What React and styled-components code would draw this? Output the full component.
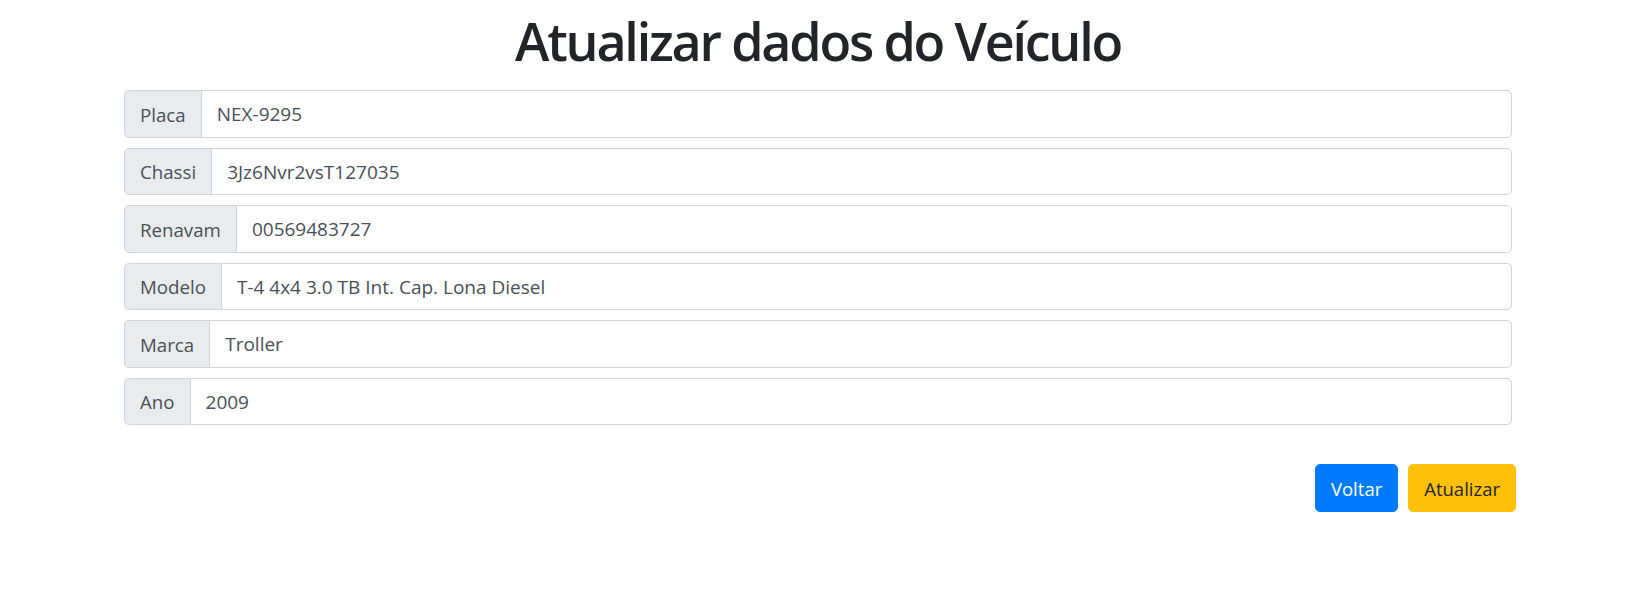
import React from "react";
import styled, { createGlobalStyle } from "styled-components";

const GlobalStyle = createGlobalStyle`
  body {
    margin: 0;
    background: #fff;
    font-family: "Open Sans", "Noto Sans", sans-serif;
    color: #212529;
  }
`;

// dados do veículo carregados
const fields = [
  { label: "Placa", value: "NEX-9295" },
  { label: "Chassi", value: "3Jz6Nvr2vsT127035" },
  { label: "Renavam", value: "00569483727" },
  { label: "Modelo", value: "T-4 4x4 3.0 TB Int. Cap. Lona Diesel" },
  { label: "Marca", value: "Troller" },
  { label: "Ano", value: "2009" },
];

const App = () => {
  return (
    <>
      <GlobalStyle />
      <Page>
        <Title>Atualizar dados do Veículo</Title>
        <Form onSubmit={(e) => e.preventDefault()}>
          {fields.map((f) => (
            <InputGroup key={f.label}>
              <Addon>{f.label}</Addon>
              <Input type="text" defaultValue={f.value} />
            </InputGroup>
          ))}
          <Actions>
            <Button type="button" variant="primary">
              Voltar
            </Button>
            <Button type="submit" variant="warning">
              Atualizar
            </Button>
          </Actions>
        </Form>
      </Page>
    </>
  );
};

const Page = styled.div`
  padding: 10px 138px 40px 124px;
`;

const Title = styled.h1`
  margin: 0 0 18px;
  text-align: center;
  font-size: 52px;
  font-weight: 600;
  letter-spacing: -2.2px;
  line-height: 1.2;
  color: #212529;
`;

const Form = styled.form`
  display: flex;
  flex-direction: column;
`;

const InputGroup = styled.div`
  display: flex;
  align-items: stretch;
  height: 47.5px;
  margin-bottom: 10px;
`;

const Addon = styled.span`
  display: flex;
  align-items: center;
  padding: 0 15px;
  font-size: 18.7px;
  color: #495057;
  background: #e9ecef;
  border: 1px solid #ced4da;
  border-radius: 5px 0 0 5px;
  white-space: nowrap;
`;

const Input = styled.input`
  flex: 1;
  min-width: 0;
  padding: 0 15px;
  margin-left: -1px;
  font-family: inherit;
  font-size: 19px;
  color: #495057;
  background: #fff;
  border: 1px solid #ced4da;
  border-radius: 0 5px 5px 0;
  outline: none;
`;

const Actions = styled.div`
  display: flex;
  justify-content: flex-end;
  gap: 10px;
  margin-top: 29px;
  margin-right: -4px;
`;

const Button = styled.button`
  height: 47.5px;
  padding: 0 15px;
  font-family: inherit;
  font-size: 18.5px;
  border: 1px solid transparent;
  border-radius: 5px;
  cursor: pointer;
  color: ${(p) => (p.variant === "primary" ? "#fff" : "#212529")};
  background: ${(p) => (p.variant === "primary" ? "#007bff" : "#ffc107")};
  border-color: ${(p) => (p.variant === "primary" ? "#007bff" : "#ffc107")};
`;

export default App;
